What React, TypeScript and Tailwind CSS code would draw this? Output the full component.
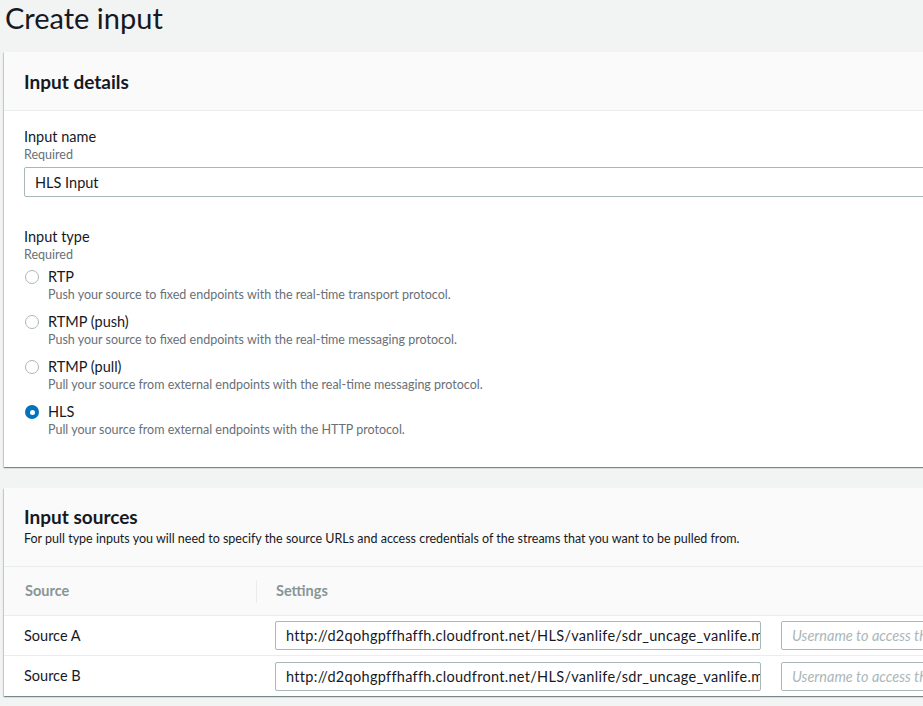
const font = { fontFamily: "Lato, 'Open Sans', sans-serif" };

const types = [
  { name: "RTP", desc: "Push your source to fixed endpoints with the real-time transport protocol." },
  { name: "RTMP (push)", desc: "Push your source to fixed endpoints with the real-time messaging protocol." },
  { name: "RTMP (pull)", desc: "Pull your source from external endpoints with the real-time messaging protocol." },
  { name: "HLS", desc: "Pull your source from external endpoints with the HTTP protocol.", checked: true },
];

const url = "http://d2qohgpffhaffh.cloudfront.net/HLS/vanlife/sdr_uncage_vanlife.m3u8";

function Radio({ checked }: { checked?: boolean }) {
  if (checked) {
    return (
      <div className="mt-[3px] flex h-[14px] w-[14px] shrink-0 items-center justify-center rounded-full bg-[#0073bb]">
        <div className="h-[5px] w-[5px] rounded-full bg-white" />
      </div>
    );
  }
  return <div className="mt-[3px] h-[14px] w-[14px] shrink-0 rounded-full border border-[#aab7b8] bg-white" />;
}

const card =
  "w-[1100px] ml-[4px] bg-white shadow-[0_1px_1px_0_rgba(0,28,36,0.3),1px_1px_1px_0_rgba(0,28,36,0.15),-1px_1px_1px_0_rgba(0,28,36,0.15)]";

export default function App() {
  return (
    <div className="h-[706px] w-[923px] overflow-hidden bg-[#f2f3f3] text-[#16191f]" style={font}>
      <h1 className="h-[52px] pl-[5px] text-[29px] leading-[36px]">Create input</h1>

      <div className={card}>
        <div className="flex h-[59px] items-center border-b border-[#eaeded] bg-[#fafafa] pl-[20px] pt-[3px]">
          <h2 className="text-[19px] font-bold">Input details</h2>
        </div>
        <div className="pl-[20px] pt-[16px] pb-[29px]">
          <div className="text-[14.5px] leading-[20px]">Input name</div>
          <div className="text-[12.5px] leading-[16px] text-[#687078]">Required</div>
          <input
            readOnly
            value="HLS Input"
            className="mt-[4px] block h-[30px] w-[1060px] rounded-[2px] border border-[#aab7b8] px-[10px] text-[14.5px] text-[#16191f] outline-none"
          />

          <div className="mt-[30px] text-[14.5px] leading-[20px]">Input type</div>
          <div className="text-[12.5px] leading-[16px] text-[#687078]">Required</div>
          <div className="mt-[4px] flex flex-col gap-[9px] pl-[1px]">
            {types.map((t) => (
              <div key={t.name} className="flex gap-[9px]">
                <Radio checked={t.checked} />
                <div>
                  <div className="text-[14.5px] leading-[20px]">{t.name}</div>
                  <div className="text-[12.5px] leading-[16px] text-[#687078]">{t.desc}</div>
                </div>
              </div>
            ))}
          </div>
        </div>
      </div>

      <div className={card + " mt-[21px]"}>
        <div className="border-b border-[#eaeded] bg-[#fafafa] pl-[20px] pt-[17px] pb-[19px]">
          <h2 className="text-[19px] font-bold leading-[24px]">Input sources</h2>
          <p className="mt-[2px] text-[12.5px] leading-[16px]">
            For pull type inputs you will need to specify the source URLs and access credentials of the streams that
            you want to be pulled from.
          </p>
        </div>
        <div className="flex h-[49px] items-center border-b border-[#eaeded] bg-[#fafafa] text-[14.5px] font-bold text-[#879596]">
          <div className="w-[252px] pl-[21px]">Source</div>
          <div className="h-[23px] border-l border-[#eaeded]" />
          <div className="pl-[19px]">Settings</div>
        </div>
        {["Source A", "Source B"].map((s, i) => (
          <div key={s} className={"flex h-[40px] items-center " + (i === 0 ? "border-b border-[#eaeded]" : "")}>
            <div className="w-[252px] pl-[20px] text-[14.5px]">{s}</div>
            <input
              readOnly
              value={url}
              className="ml-[19px] h-[29px] w-[486px] rounded-[2px] border border-[#aab7b8] pl-[10px] pr-0 text-[14.5px] tracking-[0.3px] text-[#16191f] outline-none"
            />
            <input
              readOnly
              placeholder="Username to access the source"
              className="ml-[20px] h-[29px] w-[300px] rounded-[2px] border border-[#aab7b8] px-[10px] text-[14.5px] italic outline-none placeholder:text-[#aab7b8]"
            />
          </div>
        ))}
      </div>
    </div>
  );
}
